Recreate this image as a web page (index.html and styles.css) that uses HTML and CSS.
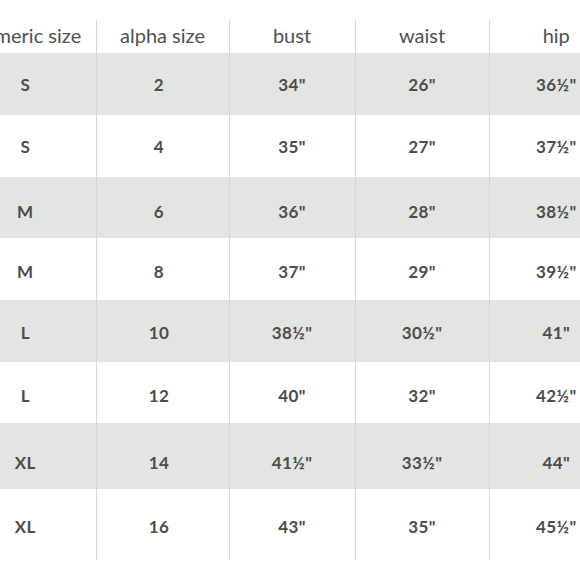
FILE: index.html
```html
<!DOCTYPE html>
<html lang="en">
<head>
<meta charset="utf-8">
<title>Size chart</title>
<link rel="stylesheet" href="styles.css">
</head>
<body>
<div class="frame">
<table class="chart">
  <colgroup>
    <col class="c1"><col class="c2"><col class="c3"><col class="c4"><col class="c5">
  </colgroup>
  <thead>
    <tr class="head"><th>numeric size</th><th>alpha size</th><th>bust</th><th>waist</th><th>hip</th></tr>
  </thead>
  <tbody>
    <tr class="r1 shade"><td>S</td><td>2</td><td>34"</td><td>26"</td><td>36½"</td></tr>
    <tr class="r2"><td>S</td><td>4</td><td>35"</td><td>27"</td><td>37½"</td></tr>
    <tr class="r3 shade"><td>M</td><td>6</td><td>36"</td><td>28"</td><td>38½"</td></tr>
    <tr class="r4"><td>M</td><td>8</td><td>37"</td><td>29"</td><td>39½"</td></tr>
    <tr class="r5 shade"><td>L</td><td>10</td><td>38½"</td><td>30½"</td><td>41"</td></tr>
    <tr class="r6"><td>L</td><td>12</td><td>40"</td><td>32"</td><td>42½"</td></tr>
    <tr class="r7 shade"><td>XL</td><td>14</td><td>41½"</td><td>33½"</td><td>44"</td></tr>
    <tr class="r8"><td>XL</td><td>16</td><td>43"</td><td>35"</td><td>45½"</td></tr>
  </tbody>
</table>
</div>
</body>
</html>
```
FILE: styles.css
```css
html, body {
  margin: 0;
  padding: 0;
  background: #ffffff;
}
body {
  width: 580px;
  height: 580px;
  overflow: hidden;
  font-family: Lato, "Liberation Sans", sans-serif;
  color: #4c4d4c;
}
.frame {
  padding-top: 20px;
  margin-left: -38px;
}
.chart {
  border-collapse: collapse;
  table-layout: fixed;
  width: 661px;
}
.c1 { width: 134px; }
.c2 { width: 133px; }
.c3 { width: 126px; }
.c4 { width: 134px; }
.c5 { width: 134px; }

.chart th,
.chart td {
  padding: 0;
  text-align: center;
  vertical-align: middle;
}
.chart th + th,
.chart td + td {
  border-left: 1px solid #d6d8d6;
}
.chart th {
  height: 33px;
  font-size: 20px;
  font-weight: 400;
  color: #505150;
  vertical-align: top;
  line-height: 30px;
}
.chart td {
  font-size: 17px;
  font-weight: 700;
  letter-spacing: 0.4px;
}
.chart th:first-child {
  padding-right: 4px;
}
.chart td:first-child,
.chart td:nth-child(2) {
  padding-right: 7px;
}
.shade td {
  background: #e3e5e2;
}
.r1 td { height: 62px; }
.r2 td { height: 62px; }
.r3 td { height: 53px; padding-top: 8px; }
.r4 td { height: 58px; padding-top: 4px; }
.r5 td { height: 60px; padding-top: 2px; }
.r6 td { height: 55px; padding-top: 6px; }
.r7 td { height: 54px; padding-top: 12px; }
.r8 td { height: 67px; padding-top: 4px; }
```
